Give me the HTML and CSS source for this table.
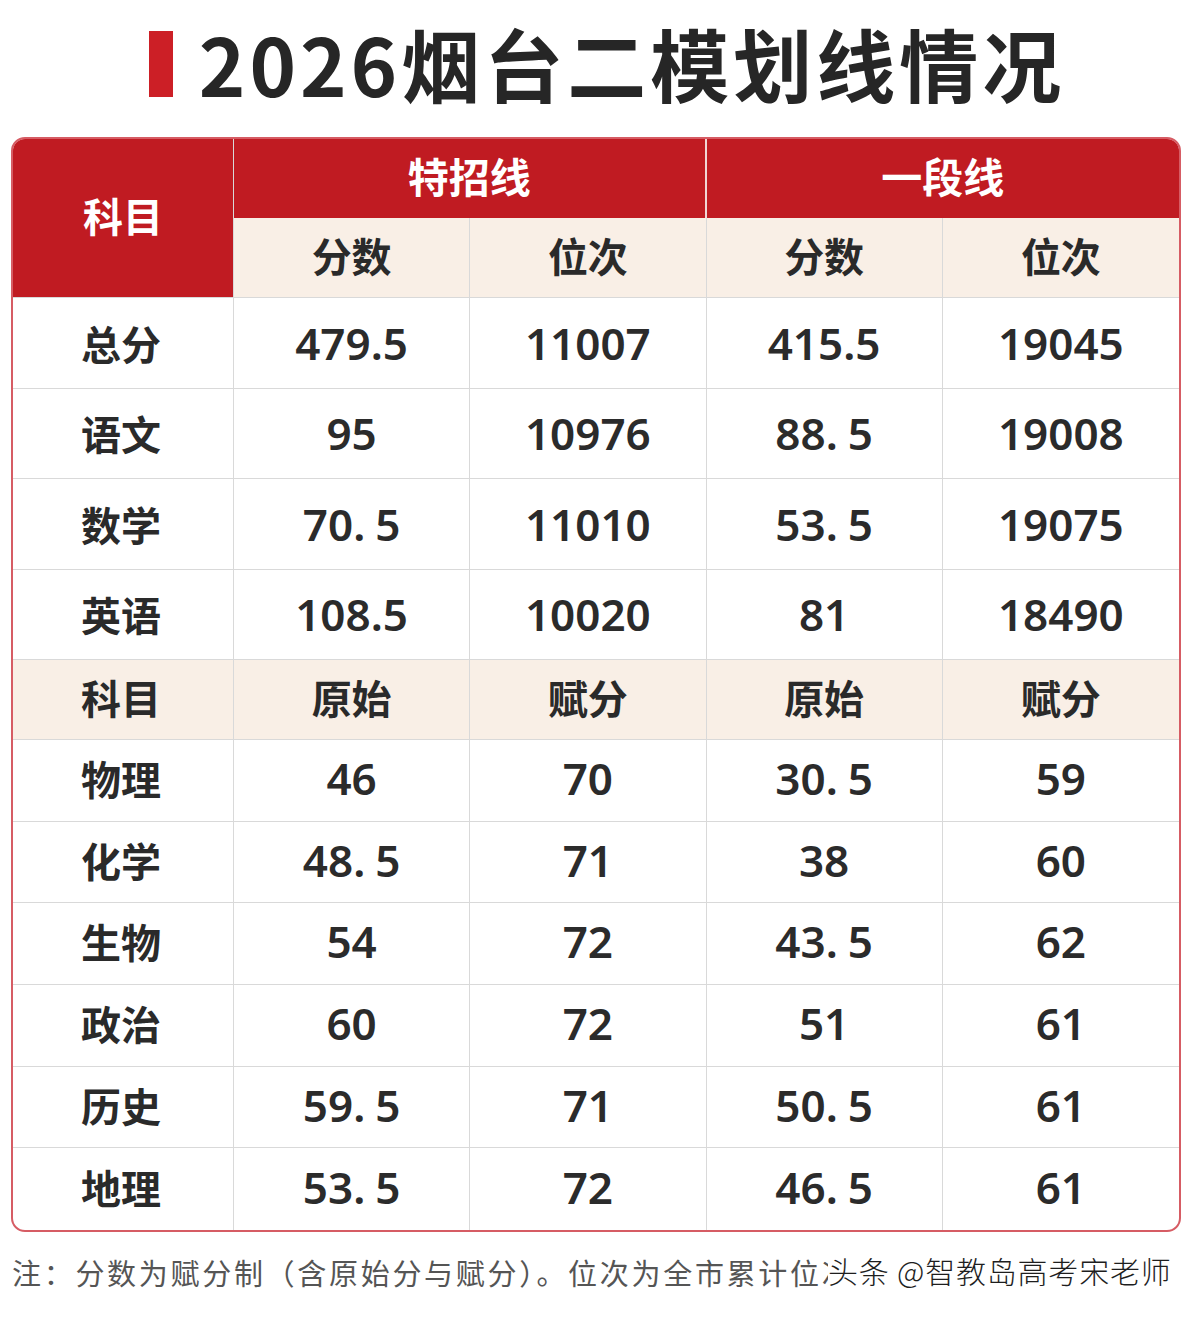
FILE: index.html
```html
<!DOCTYPE html>
<html lang="zh-CN">
<head>
<meta charset="utf-8">
<title>2026烟台二模划线情况</title>
<link rel="stylesheet" href="styles.css">
</head>
<body>
<div class="page">
  <h1 class="title"><span class="bar"></span><span class="title-text">2026烟台二模划线情况</span></h1>

  <div class="table">
    <div class="cell head-red subject-head">科目</div>
    <div class="cell head-red group">特招线</div>
    <div class="cell head-red group last">一段线</div>
    <div class="cell sub">分数</div>
    <div class="cell sub">位次</div>
    <div class="cell sub">分数</div>
    <div class="cell sub last">位次</div>

    <div class="cell up label">总分</div>
    <div class="cell up num">479.5</div>
    <div class="cell up num">11007</div>
    <div class="cell up num">415.5</div>
    <div class="cell up num last">19045</div>

    <div class="cell up label">语文</div>
    <div class="cell up num">95</div>
    <div class="cell up num">10976</div>
    <div class="cell up num">88<span class="dot">.</span>5</div>
    <div class="cell up num last">19008</div>

    <div class="cell up label">数学</div>
    <div class="cell up num">70<span class="dot">.</span>5</div>
    <div class="cell up num">11010</div>
    <div class="cell up num">53<span class="dot">.</span>5</div>
    <div class="cell up num last">19075</div>

    <div class="cell up label">英语</div>
    <div class="cell up num">108.5</div>
    <div class="cell up num">10020</div>
    <div class="cell up num">81</div>
    <div class="cell up num last">18490</div>

    <div class="cell sub2 label">科目</div>
    <div class="cell sub2">原始</div>
    <div class="cell sub2">赋分</div>
    <div class="cell sub2">原始</div>
    <div class="cell sub2 last">赋分</div>

    <div class="cell low label">物理</div>
    <div class="cell low num">46</div>
    <div class="cell low num">70</div>
    <div class="cell low num">30<span class="dot">.</span>5</div>
    <div class="cell low num last">59</div>

    <div class="cell low label">化学</div>
    <div class="cell low num">48<span class="dot">.</span>5</div>
    <div class="cell low num">71</div>
    <div class="cell low num">38</div>
    <div class="cell low num last">60</div>

    <div class="cell low label">生物</div>
    <div class="cell low num">54</div>
    <div class="cell low num">72</div>
    <div class="cell low num">43<span class="dot">.</span>5</div>
    <div class="cell low num last">62</div>

    <div class="cell low label">政治</div>
    <div class="cell low num">60</div>
    <div class="cell low num">72</div>
    <div class="cell low num">51</div>
    <div class="cell low num last">61</div>

    <div class="cell low label">历史</div>
    <div class="cell low num">59<span class="dot">.</span>5</div>
    <div class="cell low num">71</div>
    <div class="cell low num">50<span class="dot">.</span>5</div>
    <div class="cell low num last">61</div>

    <div class="cell low label bottom">地理</div>
    <div class="cell low num bottom">53<span class="dot">.</span>5</div>
    <div class="cell low num bottom">72</div>
    <div class="cell low num bottom">46<span class="dot">.</span>5</div>
    <div class="cell low num bottom last">61</div>
  </div>

  <div class="footer">
    <p class="note">注：分数为赋分制（含原始分与赋分）。位次为全市累计位次</p>
    <span class="watermark">头条 @智教岛高考宋老师</span>
  </div>
</div>
</body>
</html>
```

FILE: styles.css
```css
html, body {
  margin: 0;
  padding: 0;
  background: #ffffff;
}

.page {
  width: 1194px;
  font-family: "Noto Sans CJK SC", "Noto Sans", sans-serif;
  color: #2a2a2a;
}

.title {
  margin: 0;
  height: 137px;
  display: flex;
  align-items: center;
  justify-content: center;
  gap: 26px;
  padding-left: 20px;
  padding-bottom: 12px;
  box-sizing: border-box;
}

.bar {
  width: 24px;
  height: 66px;
  background: #cc1f26;
  margin-top: 2px;
}

.title-text {
  font-size: 79px;
  font-weight: 700;
  letter-spacing: 4px;
  color: #262626;
  line-height: 1;
}

.table {
  margin-left: 11px;
  width: 1170px;
  box-sizing: border-box;
  border: 2px solid #d65c64;
  border-radius: 14px;
  overflow: hidden;
  display: grid;
  grid-template-columns: 221px repeat(4, 1fr);
  grid-template-rows: 79px 80px repeat(4, 90.5px) 80px repeat(6, 81.7px);
  background: #ffffff;
}

.cell {
  display: flex;
  align-items: center;
  justify-content: center;
  border-right: 1px solid #d9d9d9;
  border-bottom: 1px solid #d9d9d9;
  box-sizing: border-box;
  font-weight: 700;
}

.cell.last {
  border-right: none;
}

.cell.bottom {
  border-bottom: none;
}

.head-red {
  background: #c01b22;
  color: #ffffff;
  font-size: 40px;
  border-color: #c01b22;
}

.subject-head {
  grid-row: span 2;
  border-right: 1px solid #d9d9d9;
  border-bottom: 1px solid #d9d9d9;
  padding-bottom: 6px;
}

.group {
  grid-column: span 2;
  font-size: 41px;
  border-right: 2px solid #f1d6d6;
  border-bottom: none;
  padding-bottom: 8px;
}

.group.last {
  border-right: none;
}

.sub, .sub2 {
  background: #f9efe6;
  font-size: 40px;
  font-weight: 700;
  color: #2a2a2a;
  padding-bottom: 6px;
}

.label {
  font-size: 40px;
  color: #2a2a2a;
  padding-right: 4px;
}

.low {
  padding-bottom: 5px;
}

.num {
  font-family: "Noto Sans", "Noto Sans CJK SC", sans-serif;
  font-size: 44px;
  font-weight: 600;
  color: #2b2b2b;
}

.dot {
  margin-right: 10px;
}

.footer {
  position: relative;
  margin-top: 21px;
  padding-left: 12px;
}

.note {
  margin: 0;
  font-size: 29px;
  line-height: 38px;
  letter-spacing: 2.7px;
  color: #555555;
  font-weight: 400;
}

.watermark {
  position: absolute;
  left: 828px;
  top: -2px;
  font-size: 30px;
  line-height: 38px;
  letter-spacing: 0.8px;
  color: #1e1e1e;
  background: #ffffff;
  padding-right: 8px;
  font-weight: 300;
  text-shadow: 1px 1px 0 #fff, -1px -1px 0 #fff, 1px -1px 0 #fff, -1px 1px 0 #fff;
}
```
